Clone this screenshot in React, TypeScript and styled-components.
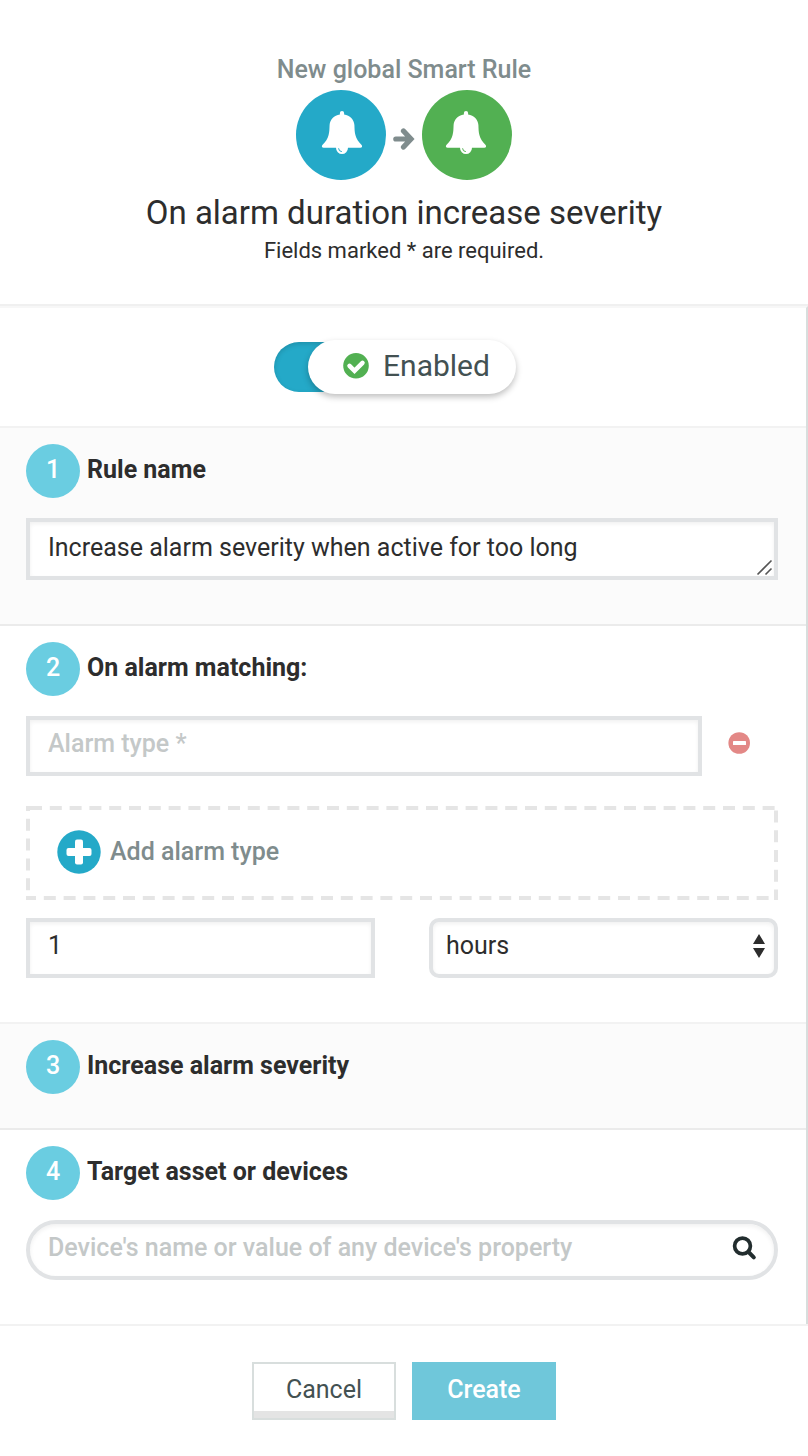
import React, { useState } from "react";
import styled, { createGlobalStyle } from "styled-components";

const teal = "#24a9c8";
const green = "#52b052";
const line = "#e1e3e5";

const GlobalStyle = createGlobalStyle`
  *, *::before, *::after { box-sizing: border-box; }
  body {
    margin: 0;
    background: #ffffff;
    color: #2d2d2d;
    font-family: Roboto, "Liberation Sans", sans-serif;
    font-size: 25px;
    line-height: 30px;
  }
  input, textarea, select, button { font: inherit; color: inherit; }
`;

const Dialog = styled.form`
  display: flex;
  flex-direction: column;
  min-height: 100vh;
`;

const Header = styled.header`
  display: flex;
  flex-direction: column;
  align-items: center;
  padding: 55px 24px 38px;
  border-bottom: 2px solid #f0f0f0;
  text-align: center;
`;

const Kicker = styled.p`
  margin: 0 0 5px;
  color: #7f8c8d;
  font-weight: 500;
`;

const Flow = styled.div`
  display: flex;
  align-items: center;
  gap: 7px;
  color: #7f8c8d;
`;

const Disc = styled.span<{ $color: string }>`
  display: flex;
  width: 90px;
  height: 90px;
  border-radius: 50%;
  background: ${(p) => p.$color};
  color: ${(p) => p.$color};
`;

const Title = styled.h1`
  margin: 13px 0 3px;
  font-size: 33px;
  line-height: 40px;
  font-weight: 400;
`;

const Hint = styled.p`
  margin: 0;
  font-size: 22px;
  line-height: 30px;
`;

const Body = styled.main`
  border-top: 2px solid #f7f7f7;
  border-right: 2px solid #d8dedd;
`;

const Section = styled.section<{ $shaded?: boolean; $bottom?: number }>`
  padding: 16px 28px ${(p) => p.$bottom ?? 44}px 26px;
  background: ${(p) => (p.$shaded ? "#fbfbfb" : "#ffffff")};
  border-bottom: 2px solid ${(p) => (p.$shaded ? "#ebebeb" : "#f2f2f2")};
  &:last-child { border-bottom: 0; }
`;

const SwitchBar = styled(Section)`
  display: flex;
  justify-content: center;
  padding: 32px 28px 32px 12px;
`;

const Switch = styled.label`
  display: flex;
  align-items: center;
  cursor: pointer;
`;

const HiddenCheck = styled.input`
  position: absolute;
  opacity: 0;
`;

const Track = styled.span<{ $on: boolean }>`
  width: 74px;
  height: 50px;
  margin-right: -40px;
  border-radius: 25px 0 0 25px;
  background: ${(p) => (p.$on ? teal : "#c5caca")};
  box-shadow: inset 0 2px 5px rgba(0, 0, 0, 0.15);
`;

const Knob = styled.span`
  display: flex;
  align-items: center;
  gap: 14px;
  height: 54px;
  padding: 0 26px 2px 34px;
  border-radius: 27px;
  background: #ffffff;
  box-shadow: 0 3px 6px rgba(0, 0, 0, 0.25);
  color: #435152;
  font-size: 30px;
`;

const Heading = styled.h2`
  display: flex;
  align-items: center;
  gap: 7px;
  margin: 0;
  font-size: 25px;
  font-weight: 700;
`;

const HeadingText = styled.span`
  padding-bottom: 2px;
`;

const Step = styled.span`
  display: flex;
  align-items: center;
  justify-content: center;
  width: 54px;
  height: 54px;
  padding-bottom: 2px;
  border-radius: 50%;
  background: #6acde1;
  color: #ffffff;
  font-weight: 500;
`;

const Fields = styled.div`
  display: flex;
  flex-direction: column;
  margin-top: 20px;
`;

const control = `
  display: block;
  width: 100%;
  min-width: 0;
  height: 60px;
  margin: 0;
  padding: 0 18px 5px;
  border: 4px solid ${line};
  border-radius: 0;
  background: #ffffff;
  box-shadow: inset 0 2px 4px rgba(0, 0, 0, 0.06);
  outline: none;
  &::placeholder { color: #c4c8c8; opacity: 1; font-weight: 500; }
  &:focus-visible { border-color: ${teal}; }
`;

const TextInput = styled.input<{ $pill?: boolean }>`
  ${control}
  ${(p) => p.$pill && "border-radius: 30px; padding-right: 60px;"}
`;

const TextArea = styled.textarea`
  ${control}
  height: 62px;
  padding: 11px 18px;
  resize: none;
  overflow: hidden;
`;

const Select = styled.select`
  ${control}
  padding: 0 40px 4px 13px;
  border-radius: 10px;
  appearance: none;
`;

const Overlay = styled.div`
  position: relative;
`;

const Adornment = styled.span<{ $right: number; $bottom: number }>`
  position: absolute;
  right: ${(p) => p.$right}px;
  bottom: ${(p) => p.$bottom}px;
  display: flex;
  pointer-events: none;
`;

const AlarmRow = styled.div`
  display: flex;
  align-items: center;
  gap: 26px;
  padding-right: 28px;
`;

const IconButton = styled.button`
  display: flex;
  padding: 0 0 6px;
  border: 0;
  background: none;
  cursor: pointer;
`;

const SearchButton = styled.button`
  position: absolute;
  top: 14px;
  right: 20px;
  display: flex;
  padding: 0;
  border: 0;
  background: none;
  color: #222d2e;
  cursor: pointer;
`;

const AddButton = styled.button`
  display: flex;
  align-items: center;
  gap: 9px;
  height: 94px;
  margin: 30px 0 18px;
  padding: 0 0 2px;
  border: 0;
  background: none;
  color: #7f8c8d;
  font-weight: 500;
  position: relative;
  cursor: pointer;
`;

const DashedFrame = styled.svg`
  position: absolute;
  inset: 0;
  width: 100%;
  height: 100%;
`;

const AddIcon = styled.svg`
  margin-left: 31px;
`;

const Duration = styled.div`
  display: grid;
  grid-template-columns: 1fr 1fr;
  gap: 54px;
`;

const Footer = styled.footer`
  display: flex;
  justify-content: center;
  gap: 16px;
  padding: 36px 24px;
  border-top: 2px solid #f2f2f2;
`;

const Button = styled.button<{ $primary?: boolean }>`
  width: 144px;
  height: 58px;
  padding: 0 0 2px;
  border: 2px solid ${(p) => (p.$primary ? "#6fc7da" : "#d8dedd")};
  background: ${(p) => (p.$primary ? "#6fc7da" : "#ffffff")};
  box-shadow: ${(p) => (p.$primary ? "none" : "inset 0 -7px 0 #e4e4e4")};
  color: ${(p) => (p.$primary ? "#ffffff" : "#435152")};
  font-weight: ${(p) => (p.$primary ? 500 : 400)};
  cursor: pointer;
`;

const ArrowBox = styled.span`
  display: flex;
  padding-top: 6px;
`;

const Bell = ({ center }: { center: number }) => (
  <svg width="90" height="90" viewBox={`${45 - center} 0 90 90`} aria-hidden="true">
    <path
      fill="#ffffff"
      d="M42.900 23a2.100 2.100 0 0 1 4.200 0v1.400C53 25.400 57 29.500 57.400 35C57.600 39 57.500 41.500 58.400 45C59.400 49 61.400 51.500 64.400 54.700C65.700 56 65.200 57.800 63.300 57.800H51A6 6.300 0 0 1 39 57.800H26.700C24.800 57.800 24.300 56 25.600 54.700C28.600 51.500 30.600 49 31.600 45C32.500 41.500 32.400 39 32.600 35C33 29.500 37 25.400 42.900 24.400Z"
    />
    <path d="M41.600 58.300a3.400 3.400 0 0 0 3.200 3.300" fill="none" stroke="currentColor" strokeWidth="1" />
  </svg>
);

const Arrow = () => (
  <svg width="22" height="24" viewBox="0 0 22 24" aria-hidden="true">
    <path
      d="M2.800 13H17M10.500 5L18 13L10.500 21"
      fill="none"
      stroke="currentColor"
      strokeWidth="5.200"
      strokeLinecap="round"
    />
  </svg>
);

export default function App() {
  const [enabled, setEnabled] = useState(true);
  return (
    <>
      <GlobalStyle />
      <Dialog onSubmit={(e) => e.preventDefault()}>
        <Header>
          <Kicker>New global Smart Rule</Kicker>
          <Flow>
            <Disc $color={teal}><Bell center={46} /></Disc>
            <ArrowBox><Arrow /></ArrowBox>
            <Disc $color={green}><Bell center={44} /></Disc>
          </Flow>
          <Title>On alarm duration increase severity</Title>
          <Hint>Fields marked * are required.</Hint>
        </Header>

        <Body>
          <SwitchBar>
            <Switch>
              <HiddenCheck type="checkbox" checked={enabled} onChange={(e) => setEnabled(e.target.checked)} />
              <Track $on={enabled} />
              <Knob>
                <svg width="27" height="27" viewBox="0 0 27 27" aria-hidden="true">
                  <circle cx="14" cy="12.800" r="12.800" fill={green} />
                  <path d="M7.500 12.800l5 5L20.500 9.800" fill="none" stroke="#fff" strokeWidth="4.500" strokeLinecap="round" />
                </svg>
                {enabled ? "Enabled" : "Disabled"}
              </Knob>
            </Switch>
          </SwitchBar>

          <Section $shaded>
            <Heading><Step>1</Step><HeadingText id="rule-name">Rule name</HeadingText></Heading>
            <Fields>
              <Overlay>
                <TextArea rows={1} aria-labelledby="rule-name" defaultValue="Increase alarm severity when active for too long" />
                <Adornment $right={5} $bottom={4}>
                  <svg width="17" height="17" viewBox="0 0 17 17" aria-hidden="true">
                    <path d="M1.500 15.500L15.500 1.500M9.500 15.500L15.500 9.500" stroke="#555" strokeWidth="1.600" />
                  </svg>
                </Adornment>
              </Overlay>
            </Fields>
          </Section>

          <Section>
            <Heading><Step>2</Step><HeadingText>On alarm matching:</HeadingText></Heading>
            <Fields>
              <AlarmRow>
                <TextInput type="text" aria-label="Alarm type" placeholder="Alarm type *" />
                <IconButton type="button" aria-label="Remove alarm type">
                  <svg width="22" height="22" viewBox="0 0 22 22" aria-hidden="true">
                    <circle cx="11.200" cy="11" r="10.800" fill="#e38886" />
                    <rect x="5" y="9" width="13" height="4" rx="0.600" fill="#fff" />
                  </svg>
                </IconButton>
              </AlarmRow>
              <AddButton type="button">
                <DashedFrame aria-hidden="true">
                  <rect x="0" y="0" width="100%" height="100%" fill="none" stroke="#e5e5e5" strokeWidth="8" strokeDasharray="12 7.800" strokeDashoffset="-4" />
                </DashedFrame>
                <AddIcon width="44" height="44" viewBox="0 0 44 44" aria-hidden="true">
                  <circle cx="22" cy="22" r="21.700" fill={teal} />
                  <rect x="9.500" y="18" width="25" height="8" rx="2" fill="#fff" />
                  <rect x="18" y="9.500" width="8" height="25" rx="2" fill="#fff" />
                </AddIcon>
                <span>Add alarm type</span>
              </AddButton>
              <Duration>
                <TextInput type="text" inputMode="numeric" aria-label="Duration" defaultValue="1" />
                <Overlay>
                  <Select aria-label="Duration unit" defaultValue="hours">
                    <option>minutes</option>
                    <option>hours</option>
                    <option>days</option>
                  </Select>
                  <Adornment $right={13} $bottom={20}>
                    <svg width="12" height="24" viewBox="0 0 12 24" aria-hidden="true">
                      <path d="M6 0l6 10H0zM6 24l6-10H0z" fill="#2d2d2d" />
                    </svg>
                  </Adornment>
                </Overlay>
              </Duration>
            </Fields>
          </Section>

          <Section $shaded $bottom={34}>
            <Heading><Step>3</Step><HeadingText>Increase alarm severity</HeadingText></Heading>
          </Section>

          <Section>
            <Heading><Step>4</Step><HeadingText id="target">Target asset or devices</HeadingText></Heading>
            <Fields>
              <Overlay>
                <TextInput $pill type="text" aria-labelledby="target" placeholder="Device's name or value of any device's property" />
                <SearchButton type="button" aria-label="Search">
                  <svg width="28" height="28" viewBox="0 0 28 28" fill="none" stroke="currentColor" aria-hidden="true">
                    <circle cx="12.500" cy="12" r="7.900" strokeWidth="3.700" />
                    <path d="M18.500 18L23.800 23.300" strokeWidth="4" strokeLinecap="round" />
                  </svg>
                </SearchButton>
              </Overlay>
            </Fields>
          </Section>
        </Body>

        <Footer>
          <Button type="button">Cancel</Button>
          <Button type="submit" $primary>Create</Button>
        </Footer>
      </Dialog>
    </>
  );
}
